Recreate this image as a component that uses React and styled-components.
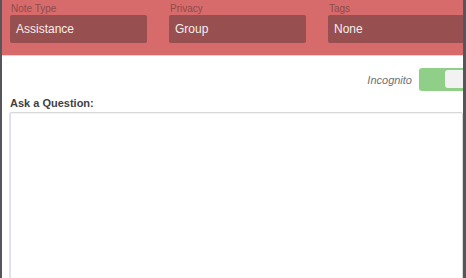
import React from "react";
import styled, { createGlobalStyle } from "styled-components";

const Global = createGlobalStyle`
  html, body { margin: 0; padding: 0; height: 100%; overflow: hidden; background: #fff; }
  #root { height: 100%; }
  * { box-sizing: border-box; }
`;

const Frame = styled.div`
  width: 466px;
  height: 278px;
  border-left: 2px solid #55555b;
  border-right: 3px solid #55555b;
  display: flex;
  flex-direction: column;
  overflow: hidden;
  font-family: "Liberation Sans", Arial, sans-serif;
  background: #fff;
`;

const Header = styled.div`
  flex-shrink: 0;
  height: 56px;
  background: #d76b6b;
  border-bottom: 1px solid #ecd2d2;
  padding: 3px 0 0 8px;
  display: flex;
  gap: 22px;
  overflow: hidden;
`;

const Field = styled.div`
  flex: 0 0 137px;
  display: flex;
  flex-direction: column;
`;

const FieldLabel = styled.div`
  font-size: 10px;
  line-height: 12px;
  color: #8f4a4a;
  padding-left: ${(p) => p.$indent || 1}px;
`;

const SelectBox = styled.div`
  height: 28px;
  background: #974f4f;
  border-radius: 2px;
  color: #f6eeee;
  font-size: 12px;
  display: flex;
  align-items: center;
  padding-left: 6px;
`;

const Body = styled.div`
  flex: 1;
  display: flex;
  flex-direction: column;
  padding: 12px 0 0 7px;
  min-height: 0;
`;

const ToggleRow = styled.div`
  display: flex;
  justify-content: flex-end;
  align-items: center;
  gap: 7px;
  margin-right: -4px;
`;

const ToggleLabel = styled.span`
  font-size: 11px;
  font-style: italic;
  color: #6f6f6f;
`;

const Toggle = styled.div`
  width: 48px;
  height: 23px;
  background: #8fcf87;
  border-radius: 3px;
  display: flex;
  justify-content: flex-end;
  padding: 2px;
`;

const Knob = styled.div`
  width: 20px;
  height: 18px;
  background: #f2f2f2;
  border-radius: 3px;
`;

const QuestionLabel = styled.label`
  margin-top: 6px;
  font-size: 11px;
  line-height: 13px;
  font-weight: bold;
  color: #3f3f3f;
  padding-left: 1px;
`;

const Question = styled.textarea`
  margin-top: 2px;
  width: 100%;
  height: 200px;
  flex-shrink: 0;
  border: 1px solid #d8d8d8;
  border-left-width: 2px;
  border-left-color: #e2e2e6;
  border-radius: 2px;
  box-shadow: inset 0 1px 1px rgba(0, 0, 0, 0.05);
  resize: none;
  outline: none;
  font-family: inherit;
`;

const fields = [
  { label: "Note Type", value: "Assistance" },
  { label: "Privacy", value: "Group" },
  { label: "Tags", value: "None" },
];

export default function App() {
  return (
    <>
      <Global />
      <Frame>
        <Header>
          {fields.map((f) => (
            <Field key={f.label}>
              <FieldLabel>{f.label}</FieldLabel>
              <SelectBox>{f.value}</SelectBox>
            </Field>
          ))}
        </Header>
        <Body>
          <ToggleRow>
            <ToggleLabel>Incognito</ToggleLabel>
            <Toggle>
              <Knob />
            </Toggle>
          </ToggleRow>
          <QuestionLabel>Ask a Question:</QuestionLabel>
          <Question />
        </Body>
      </Frame>
    </>
  );
}
